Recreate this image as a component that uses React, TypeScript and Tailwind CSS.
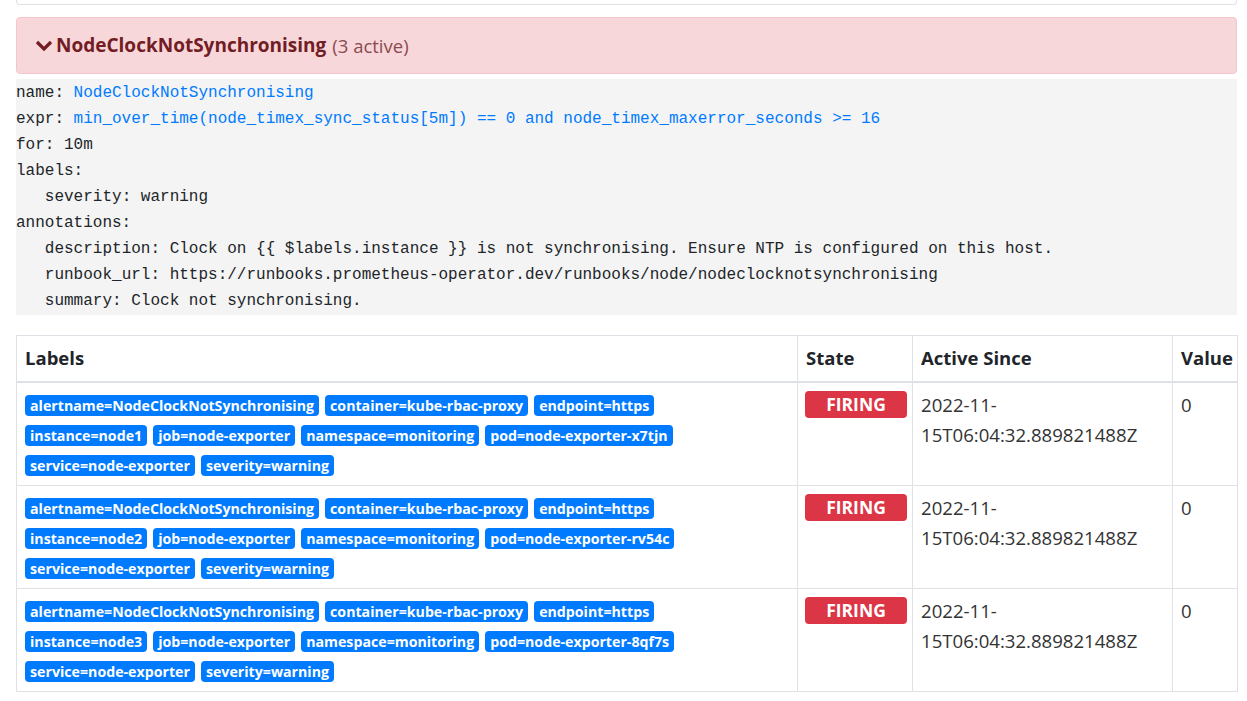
import React from 'react';

interface IAlert {
  instance: string;
  pod: string;
}

const alerts: IAlert[] = [
  { instance: 'node1', pod: 'node-exporter-x7tjn' },
  { instance: 'node2', pod: 'node-exporter-rv54c' },
  { instance: 'node3', pod: 'node-exporter-8qf7s' },
];

const sans = { fontFamily: '"Open Sans", "Noto Sans", sans-serif' };

const Badge: React.FC<{ text: string }> = ({ text }) => (
  <span className="inline-block bg-[#007bff] text-white font-bold text-[14.2px] leading-[21px] px-[5px] rounded-[4px] mr-[6px] whitespace-nowrap">
    {text}
  </span>
);

const App: React.FC = () => {
  return (
    <div className="bg-white w-[1247px] h-[701px] overflow-hidden pl-4 pr-[10px] text-[#212529]" style={sans}>
      <div className="h-[5px] border-x border-b border-[#dee2e6] rounded-b-[4px]" />

      <div className="mt-3 h-[57px] bg-[#f8d7da] border border-[#f5c6cb] rounded-[4px] flex items-center pl-[18px] text-[#721c24]">
        <svg width="18" height="12" viewBox="0 0 18 12" className="mr-[3px] mt-[1px]">
          <path d="M2 2 L9 9 L16 2" fill="none" stroke="#721c24" strokeWidth="3.2" />
        </svg>
        <span className="font-bold text-[19px]">NodeClockNotSynchronising</span>
        <span className="text-[18.5px] ml-[6px] text-[#8a4a50]">(3 active)</span>
      </div>

      <pre
        className="mt-[5px] pt-[1px] pb-[1px] bg-[#f4f4f4] text-[16px] leading-[26px] text-[#212529]"
        style={{ fontFamily: '"Liberation Mono", "DejaVu Sans Mono", monospace' }}
      >
        name: <span className="text-[#007bff]">NodeClockNotSynchronising</span>{'\n'}
        expr: <span className="text-[#007bff]">min_over_time(node_timex_sync_status[5m]) == 0 and node_timex_maxerror_seconds &gt;= 16</span>{'\n'}
        for: 10m{'\n'}
        labels:{'\n'}
        {'   '}severity: warning{'\n'}
        annotations:{'\n'}
        {'   '}description: Clock on {'{{'} $labels.instance {'}}'} is not synchronising. Ensure NTP is configured on this host.{'\n'}
        {'   '}runbook_url: https://runbooks.prometheus-operator.dev/runbooks/node/nodeclocknotsynchronising{'\n'}
        {'   '}summary: Clock not synchronising.
      </pre>

      <table className="mt-[20px] w-[1221px] table-fixed border-collapse border border-[#dee2e6]">
        <colgroup>
          <col className="w-[781px]" />
          <col className="w-[115px]" />
          <col className="w-[260px]" />
          <col className="w-[65px]" />
        </colgroup>
        <thead>
          <tr className="h-[46px]">
            <th className="text-left font-bold text-[18.5px] px-2 border border-[#dee2e6] border-b-2 align-middle">Labels</th>
            <th className="text-left font-bold text-[18.5px] px-2 border border-[#dee2e6] border-b-2 align-middle">State</th>
            <th className="text-left font-bold text-[18.5px] px-2 border border-[#dee2e6] border-b-2 align-middle">Active Since</th>
            <th className="text-left font-bold text-[18.5px] px-2 border border-[#dee2e6] border-b-2 align-middle">Value</th>
          </tr>
        </thead>
        <tbody>
          {alerts.map(a => (
            <tr key={a.instance}>
              <td className="align-top px-2 pt-[7px] pb-[5px] border border-[#dee2e6] leading-[30px]">
                <Badge text="alertname=NodeClockNotSynchronising" />
                <Badge text="container=kube-rbac-proxy" />
                <Badge text="endpoint=https" />
                <br />
                <Badge text={`instance=${a.instance}`} />
                <Badge text="job=node-exporter" />
                <Badge text="namespace=monitoring" />
                <Badge text={`pod=${a.pod}`} />
                <br />
                <Badge text="service=node-exporter" />
                <Badge text="severity=warning" />
              </td>
              <td className="align-top px-[7px] pt-[8px] border border-[#dee2e6]">
                <span className="inline-block w-[102px] h-[27px] leading-[27px] text-center bg-[#dc3545] text-white font-bold text-[17.5px] rounded-[4px]">
                  FIRING
                </span>
              </td>
              <td className="align-top px-2 pt-[7px] border border-[#dee2e6] text-[18.6px] leading-[30px] text-[#333]">
                2022-11-
                <br />
                15T06:04:32.889821488Z
              </td>
              <td className="align-top px-2 pt-[7px] border border-[#dee2e6] text-[18.6px] leading-[30px] text-[#333]">0</td>
            </tr>
          ))}
        </tbody>
      </table>
    </div>
  );
};

export default App;
